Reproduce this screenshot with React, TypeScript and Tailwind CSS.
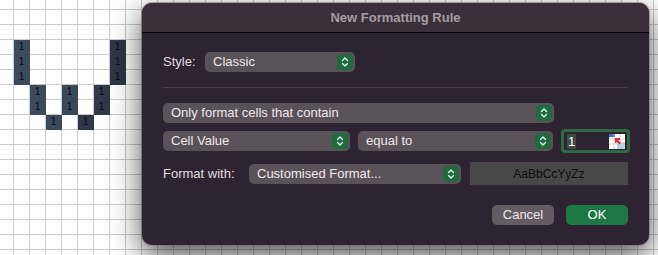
import React from 'react';

const COLS = 42;
const ROWS = 18;

// dark cells: [col, row, shade]
const filled: Record<string, string> = {
  '1-3': 'bg-[#3c4a5e] border-[#3c4a5e]',
  '1-4': 'bg-[#3c4a5e] border-[#3c4a5e]',
  '1-5': 'bg-[#3c4a5e] border-[#3c4a5e]',
  '2-6': 'bg-[#3c4a5e] border-[#3c4a5e]',
  '2-7': 'bg-[#3c4a5e] border-[#3c4a5e]',
  '3-8': 'bg-[#3a485c] border-[#3a485c]',
  '4-6': 'bg-[#3a485c] border-[#3a485c]',
  '4-7': 'bg-[#3a485c] border-[#3a485c]',
  '5-8': 'bg-[#2e3846] border-[#2e3846]',
  '6-6': 'bg-[#2f3947] border-[#2f3947]',
  '6-7': 'bg-[#2f3947] border-[#2f3947]',
  '7-3': 'bg-[#2d3745] border-[#2d3745]',
  '7-4': 'bg-[#2d3745] border-[#2d3745]',
  '7-5': 'bg-[#2d3745] border-[#2d3745]',
};

const Stepper = () => (
  <span className="flex h-[16px] w-[16px] items-center justify-center rounded-[4px] bg-[#1e6c3e]">
    <svg width="8" height="12" viewBox="0 0 8 12" fill="none" stroke="#e8f2ea" strokeWidth="1.4" strokeLinecap="round" strokeLinejoin="round">
      <path d="M1.5 4.5 4 2l2.5 2.5" />
      <path d="M1.5 7.5 4 10l2.5-2.5" />
    </svg>
  </span>
);

const Select = ({ label, className }: { label: string; className: string }) => (
  <div className={`flex h-[20px] items-center justify-between rounded-[5px] bg-[#5b5159] pl-[8px] pr-[2px] ${className}`}>
    <span className="text-[13px] text-[#eee8ec]">{label}</span>
    <Stepper />
  </div>
);

const RangeIcon = () => (
  <svg width="16" height="15" viewBox="0 0 16 15">
    <rect x="0" y="0" width="16" height="15" fill="#ffffff" />
    <rect x="0" y="0" width="6" height="3" fill="#3b6fc8" />
    <rect x="8" y="8" width="8" height="7" fill="#bcd2ec" />
    <path d="M0 5h16M0 10h16M5 0v15M11 0v15" stroke="#c9c9c9" strokeWidth="0.8" />
    <path d="M6 4h5v2H9l3 3-1.5 1.5-3-3V9H6z" fill="#d8323a" />
  </svg>
);

export default function App() {
  const cells = [];
  for (let r = 0; r < ROWS; r++) {
    for (let c = 0; c < COLS; c++) {
      const dark = filled[`${c}-${r}`];
      cells.push(
        <div
          key={`${c}-${r}`}
          className={`flex items-center justify-center border-r border-b ${dark ? dark : 'bg-white border-[#c9c9c9]'}`}>
          {dark && <span className="text-[10px] leading-none text-[#0b0b0b]">1</span>}
        </div>
      );
    }
  }

  return (
    <div className="relative h-[255px] w-[658px] overflow-hidden bg-white font-['Liberation_Sans',Arial,sans-serif]">
      <div className="grid grid-cols-[14px_repeat(41,16px)] grid-rows-[10px_repeat(17,15px)]">{cells}</div>

      <div className="absolute left-[142px] top-[3px] flex h-[242px] w-[507px] flex-col overflow-hidden rounded-[10px] bg-[#2e2330] shadow-[0_0_0_1px_rgba(120,110,118,0.55),0_10px_30px_rgba(0,0,0,0.7)]">
        <div className="flex h-[30px] shrink-0 items-center justify-center border-b border-black bg-[#3b3039]">
          <span className="text-[13px] font-bold text-[#a59da3]">New Formatting Rule</span>
        </div>

        <div className="flex flex-col px-[21px] pt-[19px]">
          <div className="flex h-[20px] items-center">
            <span className="w-[42px] text-[13px] text-[#e2dde0]">Style:</span>
            <Select label="Classic" className="w-[150px]" />
          </div>

          <div className="mt-[15px] h-px bg-[#463b45]" />

          <Select label="Only format cells that contain" className="mt-[15px] w-[391px]" />

          <div className="mt-[6px] flex h-[24px] items-center gap-[8px]">
            <Select label="Cell Value" className="w-[187px]" />
            <Select label="equal to" className="w-[195px]" />
            <div className="-mr-[2px] flex h-[24px] w-[69px] items-center justify-between rounded-[4px] border-[3px] border-[#2c6b41] bg-[#2e2330] pl-[3px] pr-[2px]">
              <span className="bg-[#3f4a42] px-[1px] text-[13px] leading-[15px] text-white">1</span>
              <RangeIcon />
            </div>
          </div>

          <div className="mt-[9px] flex h-[23px] items-center">
            <span className="w-[86px] text-[13px] text-[#e2dde0]">Format with:</span>
            <Select label="Customised Format..." className="w-[212px]" />
            <div className="ml-[9px] flex h-[23px] w-[158px] items-center justify-center bg-[#484848]">
              <span className="text-[12px] text-[#0e0e0e]">AaBbCcYyZz</span>
            </div>
          </div>

          <div className="mt-[20px] flex justify-end gap-[12px]">
            <button className="flex h-[20px] w-[62px] items-center justify-center rounded-[5px] bg-[#655b63] text-[13px] text-[#eee8ec]">
              Cancel
            </button>
            <button className="flex h-[20px] w-[62px] items-center justify-center rounded-[5px] bg-[#1f7745] text-[13px] text-white">
              OK
            </button>
          </div>
        </div>
      </div>
    </div>
  );
}
